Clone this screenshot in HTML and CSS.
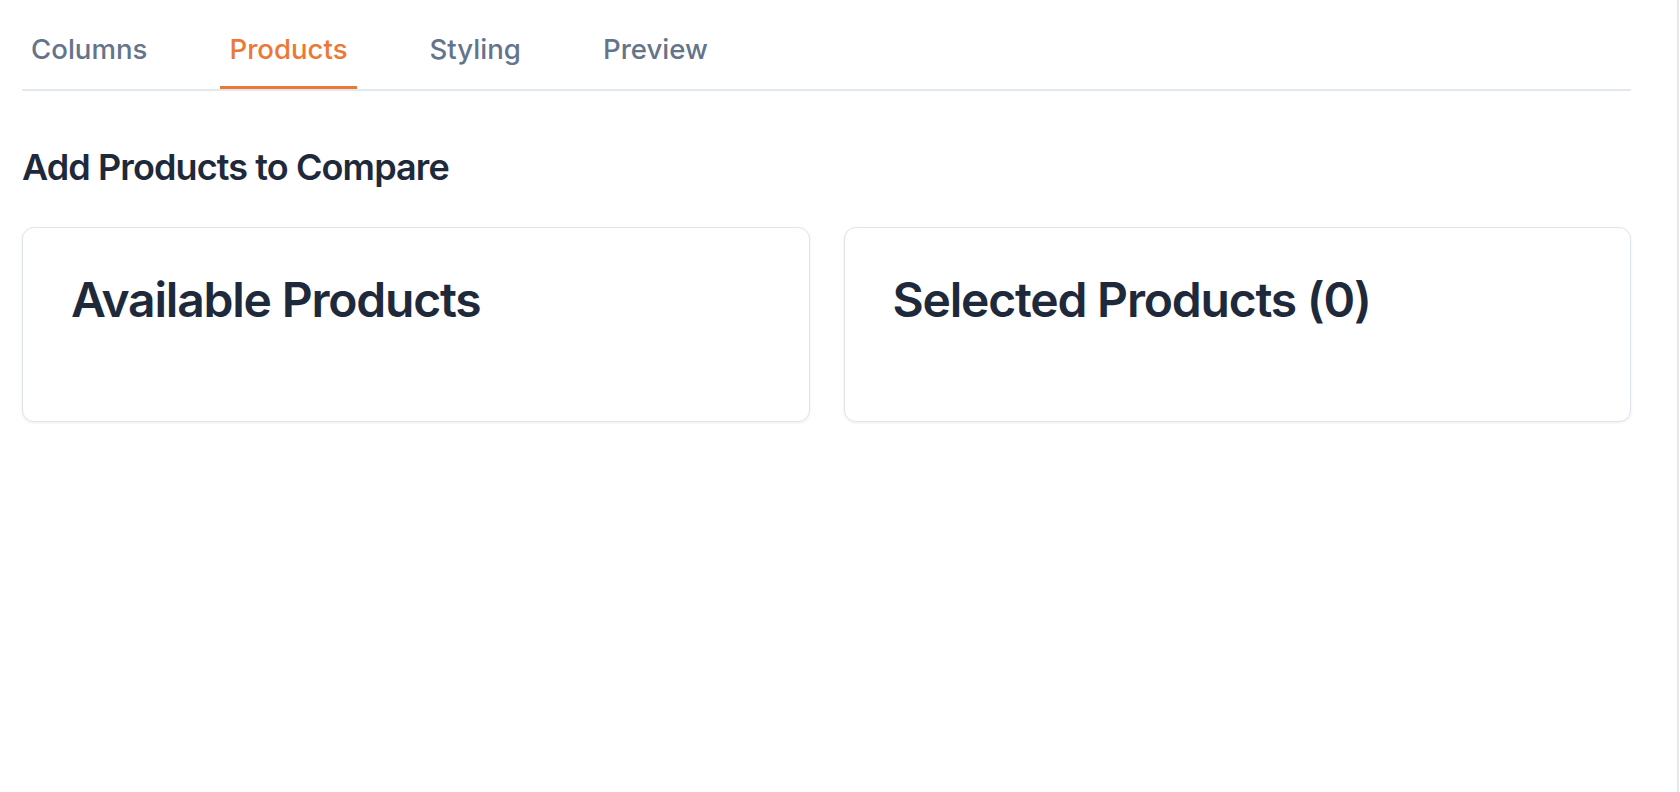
FILE: index.html
```html
<!DOCTYPE html>
<html lang="en">
<head>
<meta charset="utf-8">
<title>Compare Products</title>
<link rel="stylesheet" href="styles.css">
</head>
<body>
<div class="app">
  <main class="main">
    <nav class="tabs">
      <button class="tab">Columns</button>
      <button class="tab tab-active">Products</button>
      <button class="tab">Styling</button>
      <button class="tab">Preview</button>
    </nav>
    <h2 class="section-title">Add Products to Compare</h2>
    <div class="cards">
      <section class="card">
        <h3 class="card-title">Available Products</h3>
        <div class="card-body"></div>
      </section>
      <section class="card">
        <h3 class="card-title">Selected Products (0)</h3>
        <div class="card-body"></div>
      </section>
    </div>
  </main>
</div>
</body>
</html>
```

FILE: styles.css
```css
* {
  box-sizing: border-box;
}

html, body {
  margin: 0;
  padding: 0;
  background: #ffffff;
}

body {
  font-family: Inter, "Noto Sans", "Liberation Sans", sans-serif;
  color: #1e293b;
}

.app {
  display: flex;
  width: 1680px;
  height: 792px;
}

.main {
  width: 1679px;
  height: 792px;
  padding: 22px 46px 22px 22px;
  border-right: 2px solid #e5e7eb;
}

.tabs {
  display: flex;
  gap: 64px;
  border-bottom: 2px solid #e2e8f0;
}

.tab {
  font-family: inherit;
  font-size: 27.6px;
  line-height: 42px;
  font-weight: 500;
  color: #64748b;
  background: none;
  border: none;
  border-bottom: 3px solid transparent;
  padding: 6px 9px 16px;
  margin: 0;
  cursor: pointer;
}

.tab-active {
  color: #ed7836;
  border-bottom-color: #ed7836;
}

.section-title {
  margin: 52px 0 36px;
  font-size: 36px;
  line-height: 48px;
  font-weight: 600;
  letter-spacing: -0.025em;
  color: #1e293b;
}

.cards {
  display: grid;
  grid-template-columns: 1fr 1fr;
  gap: 34px;
}

.card {
  border: 1px solid #dfe5ec;
  border-radius: 12px;
  background: #ffffff;
  box-shadow: 0 1px 3px rgba(15, 23, 42, 0.08);
  padding: 45px 48px 48px;
}

.card-title {
  margin: 0;
  font-size: 48px;
  line-height: 54px;
  font-weight: 600;
  letter-spacing: -0.025em;
  color: #1e293b;
}

.card-body {
  height: 46px;
}
```
